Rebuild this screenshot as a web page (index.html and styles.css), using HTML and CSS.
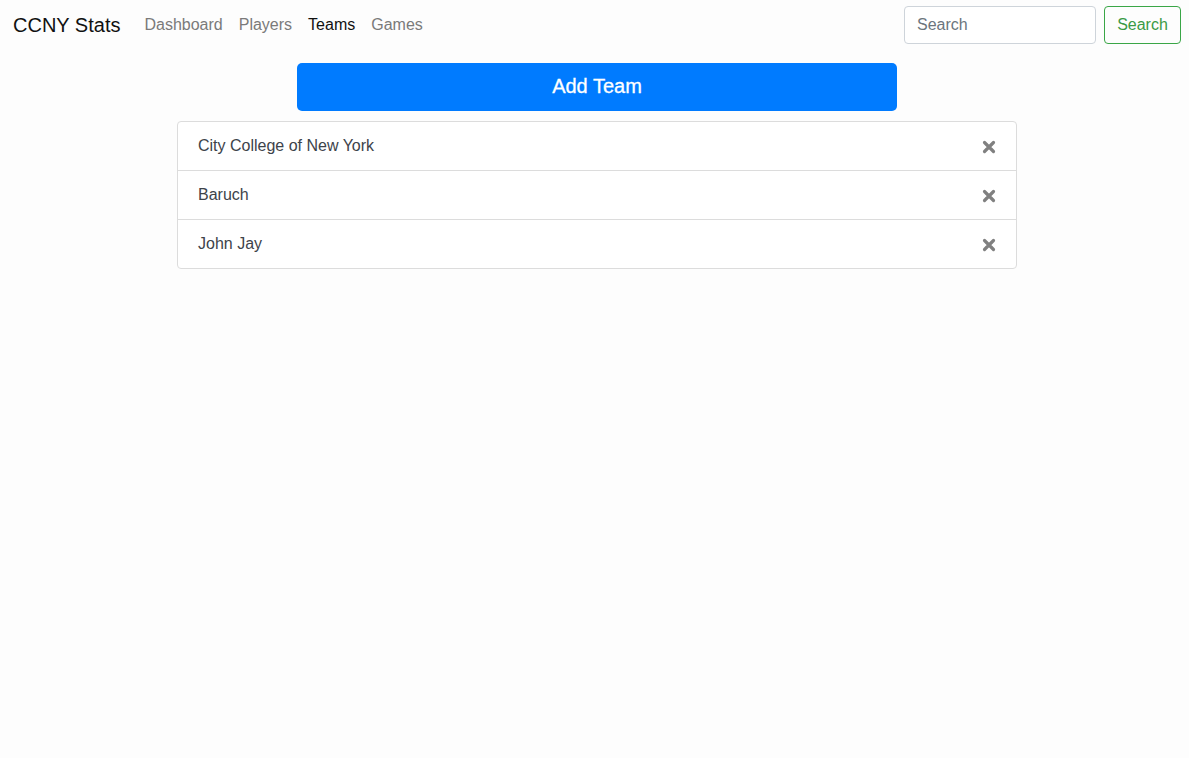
FILE: index.html
```html
<!DOCTYPE html>
<html>
<head>
<meta charset="utf-8">
<link rel="stylesheet" href="styles.css">
</head>
<body>
<nav class="navbar">
  <a class="brand" href="#">CCNY Stats</a>
  <ul class="nav-links">
    <li><a href="#">Dashboard</a></li>
    <li><a href="#">Players</a></li>
    <li><a href="#" class="active">Teams</a></li>
    <li><a href="#">Games</a></li>
  </ul>
  <form class="search-form">
    <input class="search-input" type="text" placeholder="Search">
    <button class="search-btn" type="button">Search</button>
  </form>
</nav>
<main class="main">
  <button class="add-btn" type="button">Add Team</button>
  <ul class="team-list">
    <li class="team-item"><span>City College of New York</span>
      <svg class="remove" viewBox="0 0 14 14" width="14" height="14"><path d="M2.5 2.5 L11.5 11.5 M11.5 2.5 L2.5 11.5" stroke="#808080" stroke-width="3.2" stroke-linecap="round"/></svg>
    </li>
    <li class="team-item"><span>Baruch</span>
      <svg class="remove" viewBox="0 0 14 14" width="14" height="14"><path d="M2.5 2.5 L11.5 11.5 M11.5 2.5 L2.5 11.5" stroke="#808080" stroke-width="3.2" stroke-linecap="round"/></svg>
    </li>
    <li class="team-item"><span>John Jay</span>
      <svg class="remove" viewBox="0 0 14 14" width="14" height="14"><path d="M2.5 2.5 L11.5 11.5 M11.5 2.5 L2.5 11.5" stroke="#808080" stroke-width="3.2" stroke-linecap="round"/></svg>
    </li>
  </ul>
</main>
</body>
</html>
```
FILE: styles.css
```css
* { box-sizing: border-box; }
html, body {
  margin: 0;
  padding: 0;
  background: #fdfdfd;
  font-family: "Liberation Sans", Arial, Helvetica, sans-serif;
  color: #212529;
}
.navbar {
  display: flex;
  align-items: center;
  padding: 6px 8px 6px 13px;
  height: 50px;
}
.brand {
  font-size: 20px;
  color: #111;
  text-decoration: none;
  margin-right: 16px;
  line-height: 30px;
}
.nav-links {
  display: flex;
  list-style: none;
  margin: 0;
  padding: 0;
  flex: 1;
}
.nav-links a {
  display: block;
  padding: 8px 8px;
  font-size: 16px;
  line-height: 24px;
  color: #7a7a7a;
  text-decoration: none;
}
.nav-links a.active { color: #111; }
.search-form {
  display: flex;
  align-items: center;
  gap: 8px;
}
.search-input {
  width: 192px;
  height: 38px;
  padding: 6px 12px;
  font-family: inherit;
  font-size: 16px;
  border: 1px solid #ced4da;
  border-radius: 4px;
  background: #fff;
  color: #495057;
}
.search-input::placeholder { color: #6c757d; }
.search-btn {
  height: 38px;
  width: 77px;
  padding: 6px 0;
  font-family: inherit;
  font-size: 16px;
  color: #3a9a45;
  background: transparent;
  border: 1px solid #3aa647;
  border-radius: 4px;
}
.main {
  display: flex;
  flex-direction: column;
  align-items: center;
  padding-left: 5px;
  padding-top: 13px;
}
.add-btn {
  width: 600px;
  height: 48px;
  padding: 0 0 2px;
  background: #007bff;
  color: #fff;
  border: none;
  border-radius: 5px;
  font-family: inherit;
  font-size: 20px;
  margin-bottom: 10px;
  -webkit-text-stroke: 0.3px #fff;
}
.team-list {
  width: 840px;
  list-style: none;
  margin: 0;
  padding: 0;
  border: 1px solid #dcdcdc;
  border-radius: 4px;
  background: #fff;
}
.team-item {
  display: flex;
  align-items: center;
  justify-content: space-between;
  height: 49px;
  padding: 0 20px;
  font-size: 16px;
  color: #3d434a;
  border-top: 1px solid #dcdcdc;
}
.team-item:first-child { border-top: none; height: 48px; }
.remove { margin-top: 2px; margin-right: 0; }
```
